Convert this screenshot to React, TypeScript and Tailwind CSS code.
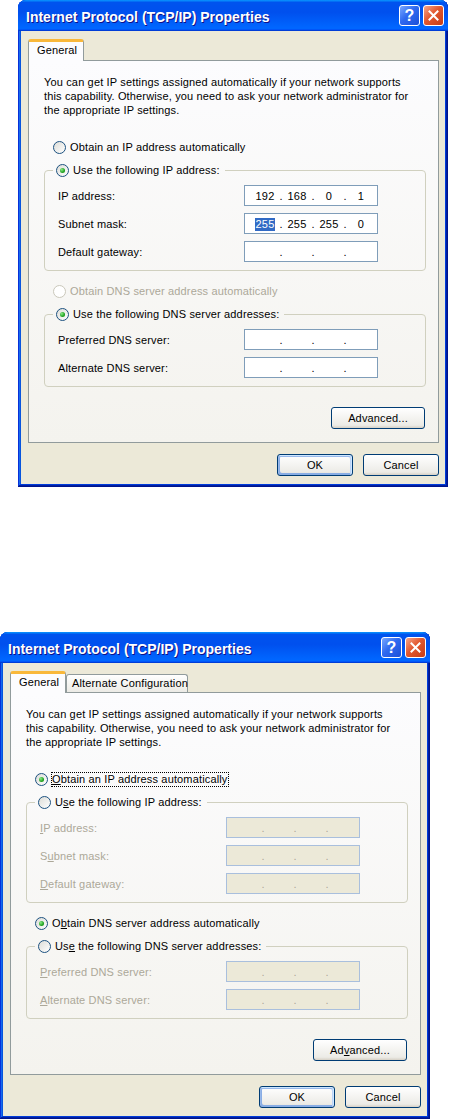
import React from "react";

type KeyProps = { t: string; i: number; on: boolean };

// underlined access key letter (only shown on the second dialog)
function Key({ t, i, on }: KeyProps) {
  if (!on) return <>{t}</>;
  return (
    <>
      {t.slice(0, i)}
      <u>{t[i]}</u>
      {t.slice(i + 1)}
    </>
  );
}

function Radio({ checked = false, disabled = false }: { checked?: boolean; disabled?: boolean }) {
  return (
    <span
      className={`relative inline-block w-[13px] h-[13px] shrink-0 rounded-full border ${
        disabled ? "border-[#cac8bb] bg-white" : "border-[#1c5180] bg-[linear-gradient(135deg,#dcdcd7,#ffffff)]"
      }`}
    >
      {checked && (
        <span className="absolute left-[3px] top-[3px] w-[5px] h-[5px] rounded-full bg-[radial-gradient(circle_at_35%_35%,#8cec88,#21a121_60%,#0f8a0f)]" />
      )}
    </span>
  );
}

function IpField({
  parts = ["", "", "", ""],
  disabled = false,
  highlightFirst = false,
}: {
  parts?: string[];
  disabled?: boolean;
  highlightFirst?: boolean;
}) {
  return (
    <div
      className={`w-[134px] h-[21px] border flex items-center pl-[6px] ${
        disabled ? "border-[#a9bfdd] bg-[#ece9d8] text-[#aca899]" : "border-[#7f9db9] bg-white text-black"
      }`}
    >
      {parts.map((p, i) => (
        <React.Fragment key={i}>
          {i > 0 && <span className="w-[4px] text-center">.</span>}
          <span className="w-[28px] text-center">
            {highlightFirst && i === 0 ? (
              <span className="bg-[#316ac5] text-white px-[1px] leading-[13px] inline-block">{p}</span>
            ) : (
              p
            )}
          </span>
        </React.Fragment>
      ))}
    </div>
  );
}

function FieldRow({ label, k, on, disabled, children }: { label: string; k: number; on: boolean; disabled?: boolean; children: React.ReactNode }) {
  return (
    <div className="flex items-center h-[21px]">
      <span className={`w-[186px] ${disabled ? "text-[#aca899]" : ""}`}>
        <Key t={label} i={k} on={on} />
      </span>
      {children}
    </div>
  );
}

function XPButton({ children, w, def = false }: { children: React.ReactNode; w: string; def?: boolean }) {
  return (
    <div
      className={`${w} h-[22px] rounded-[3px] border border-[#003c74] bg-[linear-gradient(180deg,#ffffff,#ecebe6_86%,#d6d0c5)] flex items-center justify-center ${
        def
          ? "shadow-[inset_-1px_1px_#cee7ff,inset_1px_2px_#98b8ea,inset_-2px_2px_#bcd4f6,inset_1px_-1px_#89ade4,inset_2px_-2px_#89ade4]"
          : ""
      }`}
    >
      {children}
    </div>
  );
}

function TitleBar() {
  return (
    <div className="h-[31px] shrink-0 flex items-center rounded-t-[8px] pl-[8px] pr-[4px] bg-[linear-gradient(180deg,#0997ff,#0053ee_8%,#0050ee_40%,#0066ff_88%,#0066ff_93%,#005bff_95%,#003dd7_96%,#003dd7)]">
      <span className="pt-[2px] text-white font-bold text-[14px] tracking-normal whitespace-nowrap [text-shadow:1px_1px_0_#0f1089]">
        Internet Protocol (TCP/IP) Properties
      </span>
      <div className="ml-auto flex gap-[3px]">
        <div className="w-[21px] h-[21px] rounded-[3px] border border-white bg-[linear-gradient(135deg,#78a8ff,#2f6af0_45%,#1c4fd8)] flex items-center justify-center text-white font-bold text-[16px] leading-none">
          ?
        </div>
        <div className="w-[21px] h-[21px] rounded-[3px] border border-white bg-[linear-gradient(135deg,#f5a68a,#e2582f_45%,#c63c16)] flex items-center justify-center">
          <svg width="11" height="11" viewBox="0 0 11 11">
            <path d="M1.5 1.5 L9.5 9.5 M9.5 1.5 L1.5 9.5" stroke="#fff" strokeWidth="2" strokeLinecap="square" />
          </svg>
        </div>
      </div>
    </div>
  );
}

function Dialog({ alt = false }: { alt?: boolean }) {
  return (
    <div className="w-[430px] h-[487px] flex flex-col rounded-t-[8px] bg-[#0054e3] shadow-[inset_-1px_-1px_#00138c,inset_1px_1px_#0831d9,inset_-2px_-2px_#001ea0,inset_2px_2px_#166aee,inset_-3px_-3px_#003bda,inset_3px_3px_#0855dd]">
      <TitleBar />
      <div className="flex-1 mx-[3px] mb-[3px] bg-[#ece9d8] pl-[7px] pt-[8px]">
        {/* tabs */}
        <div className="flex items-end h-[21px] whitespace-nowrap">
          <div className="relative z-10 -mb-[1px] w-[56px] h-[22px] rounded-t-[3px] border-x border-[#919b9c] border-t-[3px] border-t-[#f9b83a] bg-[#fcfcfe] pl-[8px] pt-[1px]">
            General
          </div>
          {alt && (
            <div className="w-[122px] h-[18px] rounded-t-[3px] border border-b-0 border-[#919b9c] bg-[linear-gradient(180deg,#ffffff,#f3f3ef_60%,#ecebe6)] pl-[5px] leading-[17px]">
              Alternate Configuration
            </div>
          )}
        </div>

        {/* panel */}
        <div className="w-[411px] h-[383px] border border-[#919b9c] bg-[linear-gradient(180deg,#fcfcfe,#f4f3ee)] pl-[15px] pt-[14px]">
          <div className="w-[382px] flex flex-col">
            <p className="whitespace-nowrap">
              You can get IP settings assigned automatically if your network supports
              <br />
              this capability. Otherwise, you need to ask your network administrator for
              <br />
              the appropriate IP settings.
            </p>

            <div className="mt-[23px] ml-[9px] flex items-center gap-[4px] h-[14px]">
              <Radio checked={alt} />
              <span className={alt ? "outline outline-1 outline-dotted outline-black leading-[13px]" : ""}>
                <Key t="Obtain an IP address automatically" i={0} on={alt} />
              </span>
            </div>

            <fieldset className="mt-[9px] w-[382px] border border-[#d0d0bf] rounded-[4px] pl-[13px] pb-[8px]">
              <legend className="ml-[-5px] pl-[3px] pr-[5px]">
                <span className="flex items-center gap-[4px] h-[14px]">
                  <Radio checked={!alt} />
                  <span>
                    <Key t="Use the following IP address:" i={1} on={alt} />
                  </span>
                </span>
              </legend>
              <div className="mt-[8px] flex flex-col gap-[7px]">
                <FieldRow label="IP address:" k={0} on={alt} disabled={alt}>
                  <IpField parts={alt ? undefined : ["192", "168", "0", "1"]} disabled={alt} />
                </FieldRow>
                <FieldRow label="Subnet mask:" k={1} on={alt} disabled={alt}>
                  <IpField parts={alt ? undefined : ["255", "255", "255", "0"]} disabled={alt} highlightFirst={!alt} />
                </FieldRow>
                <FieldRow label="Default gateway:" k={0} on={alt} disabled={alt}>
                  <IpField disabled={alt} />
                </FieldRow>
              </div>
            </fieldset>

            <div className="mt-[13px] ml-[9px] flex items-center gap-[4px] h-[14px]">
              <Radio checked={alt} disabled={!alt} />
              <span className={alt ? "" : "text-[#aca899]"}>
                <Key t="Obtain DNS server address automatically" i={1} on={alt} />
              </span>
            </div>

            <fieldset className="mt-[9px] w-[382px] border border-[#d0d0bf] rounded-[4px] pl-[13px] pb-[8px]">
              <legend className="ml-[-5px] pl-[3px] pr-[5px]">
                <span className="flex items-center gap-[4px] h-[14px]">
                  <Radio checked={!alt} />
                  <span>
                    <Key t="Use the following DNS server addresses:" i={2} on={alt} />
                  </span>
                </span>
              </legend>
              <div className="mt-[8px] flex flex-col gap-[7px]">
                <FieldRow label="Preferred DNS server:" k={0} on={alt} disabled={alt}>
                  <IpField disabled={alt} />
                </FieldRow>
                <FieldRow label="Alternate DNS server:" k={0} on={alt} disabled={alt}>
                  <IpField disabled={alt} />
                </FieldRow>
              </div>
            </fieldset>

            <div className="mt-[20px] flex justify-end pr-[1px]">
              <XPButton w="w-[94px]">
                <Key t="Advanced..." i={2} on={alt} />
              </XPButton>
            </div>
          </div>
        </div>

        {/* dialog buttons */}
        <div className="w-[411px] mt-[11px] flex justify-end gap-[10px]">
          <XPButton w="w-[76px]" def>
            OK
          </XPButton>
          <XPButton w="w-[76px]">Cancel</XPButton>
        </div>
      </div>
    </div>
  );
}

export default function App() {
  return (
    <div className="w-[451px] h-[1120px] bg-white text-black text-[11px] leading-[14px] tracking-[0.15px] font-['Liberation_Sans',Arial,sans-serif]">
      <div className="ml-[18px]">
        <Dialog />
      </div>
      <div className="mt-[145px]">
        <Dialog alt />
      </div>
    </div>
  );
}
